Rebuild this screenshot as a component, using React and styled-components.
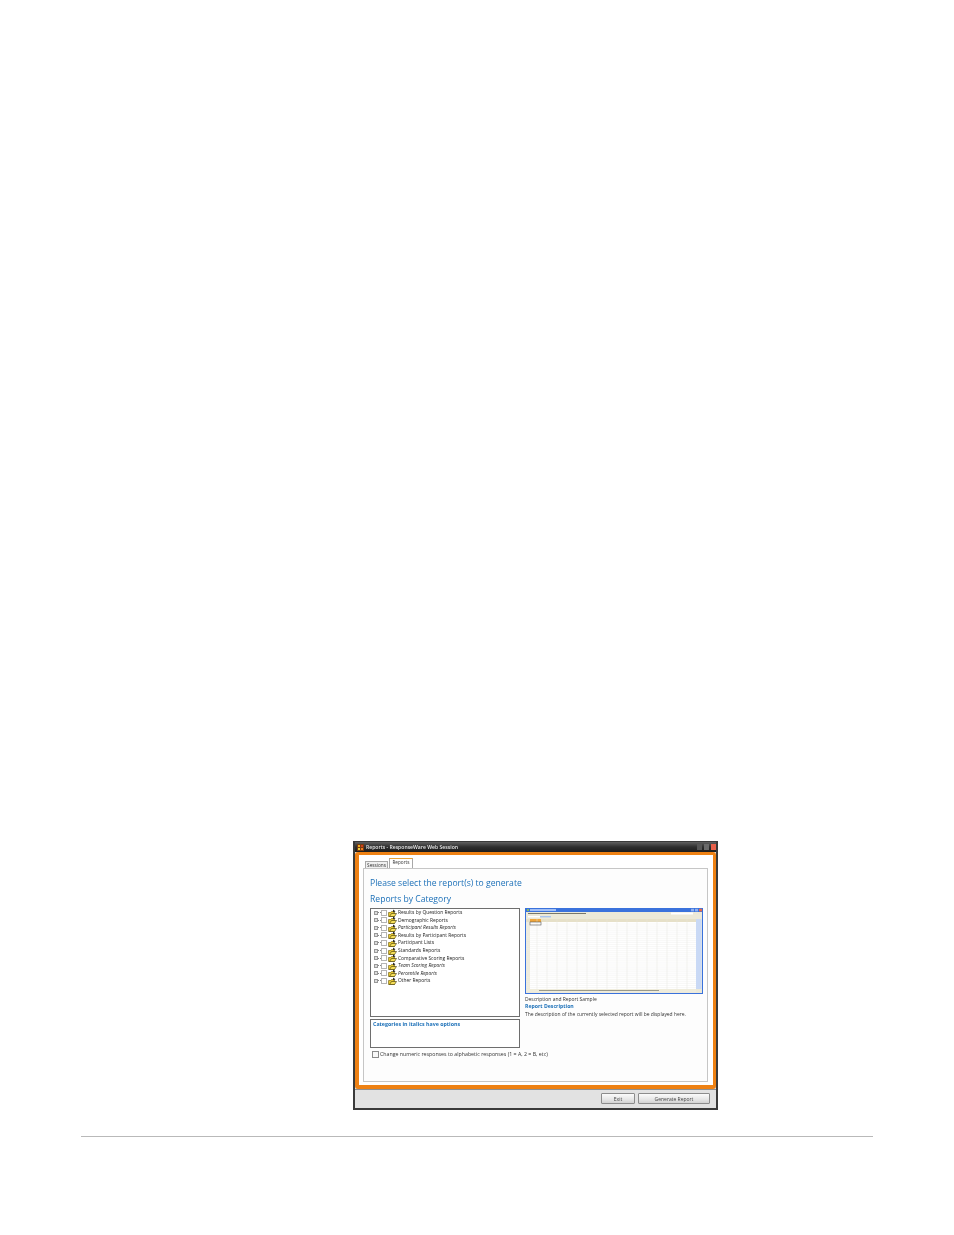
import React from "react";
import styled, { createGlobalStyle } from "styled-components";

const Global = createGlobalStyle`
  html, body { margin: 0; padding: 0; background: #fff; }
  * { box-sizing: border-box; }
`;
const Page = styled.div`
  width: 954px;
  height: 1235px;
  padding-top: 841px;
  font-family: "Open Sans", "Liberation Sans", sans-serif;
  overflow: hidden;
`;
const Win = styled.div`
  width: 365px;
  height: 269px;
  margin-left: 353px;
  display: flex;
  flex-direction: column;
  border: 1px solid #3a3a3a;
  border-left-width: 2px;
  border-right-width: 2px;
  border-bottom-width: 2px;
  background: #e0e0e0;
  filter: blur(0.35px);
`;
const TitleBar = styled.div`
  height: 10px;
  flex: none;
  display: flex;
  align-items: center;
  gap: 1px;
  padding: 0 0 0 2px;
  background: linear-gradient(#606060, #2e2e2e 50%, #1c1c1c);
`;
const Title = styled.span`
  flex: 1;
  margin-left: 1px;
  color: #e8e8e8;
  font-size: 5.1px;
  font-weight: 600;
  line-height: 10px;
  white-space: nowrap;
`;
const WinBtn = styled.span`
  width: 5px;
  height: 6px;
  margin-left: 1px;
  background: ${p => p.$c};
`;
const Frame = styled.div`
  flex: 1;
  display: flex;
  flex-direction: column;
  background: #fff;
  border: 3px solid #ee8113;
  border-left-width: 4px;
  border-bottom-width: 4px;
  border-radius: 3px;
  padding: 3px 5px 3px 4px;
`;
const Tabs = styled.div`
  display: flex;
  align-items: flex-end;
  height: 10px;
  padding-left: 2px;
  gap: 1px;
  flex: none;
`;
const Tab = styled.div`
  width: ${p => p.$w}px;
  height: ${p => (p.$on ? 10 : 7)}px;
  text-align: center;
  font-size: 4.7px;
  line-height: 7px;
  color: #333;
  background: ${p => (p.$on ? "#fff" : "#f0f0f0")};
  border: 0.6px solid #a8a8a8;
  border-bottom: 0;
  border-top: ${p => (p.$on ? "1.2px solid #e8a33a" : "0.6px solid #a8a8a8")};
`;
const Panel = styled.div`
  flex: 1;
  border: 1px solid #c6c6c6;
  background: #fdfdfd;
  padding: 9px 4px 0 6px;
  display: flex;
  flex-direction: column;
`;
const Heading = styled.div`
  font-size: 8.6px;
  line-height: 11px;
  color: #1c70b8;
  white-space: nowrap;
  margin-bottom: ${p => p.$mb}px;
`;
const Columns = styled.div`
  display: grid;
  grid-template-columns: 150px 178px;
  column-gap: 5px;
`;
const Left = styled.div`
  display: flex;
  flex-direction: column;
  gap: 2px;
`;
const TreeBox = styled.div`
  height: 109px;
  border: 1px solid #6e6e6e;
  background: #fff;
  padding: 0 0 0 3px;
  display: flex;
  flex-direction: column;
`;
const Row = styled.div`
  height: 7.55px;
  display: flex;
  align-items: center;
  flex: none;
`;
const Plus = styled.span`
  width: 4px;
  height: 4px;
  border: 0.5px solid #999;
  background: #ddd;
  flex: none;
`;
const Dash = styled.span`
  width: 3px;
  border-top: 0.5px dotted #888;
  flex: none;
`;
const Check = styled.span`
  width: 6px;
  height: 6px;
  margin-right: 1px;
  border: 0.6px solid #b4b4b4;
  background: #fff;
  flex: none;
`;
const Label = styled.span`
  margin-left: 1px;
  font-size: 4.9px;
  line-height: 7px;
  color: #222;
  white-space: nowrap;
  font-style: ${p => (p.$i ? "italic" : "normal")};
`;
const Notes = styled.div`
  height: 29px;
  border: 1px solid #6e6e6e;
  background: #fff;
  padding: 1px 2px;
  font-size: 5.3px;
  line-height: 6px;
  font-weight: 700;
  color: #1c70b8;
  white-space: nowrap;
`;
const OptionRow = styled.div`
  display: flex;
  align-items: center;
  gap: 1px;
  margin: 0 0 0 2px;
  height: 8px;
`;
const OptionBox = styled.span`
  width: 7px;
  height: 7px;
  border: 1px solid #8a8a8a;
  background: #f8f8f8;
  flex: none;
`;
const OptionText = styled.span`
  font-size: 5.25px;
  color: #333;
  white-space: nowrap;
`;
const Preview = styled.svg`
  display: block;
  width: 178px;
  height: 86px;
`;
const Small = styled.div`
  font-size: ${p => (p.$b ? 5.2 : 4.95)}px;
  line-height: 7.4px;
  white-space: nowrap;
  color: ${p => p.$c || "#333"};
  font-weight: ${p => (p.$b ? 700 : 400)};
`;
const Caption = styled.div`
  margin-top: 2px;
`;
const Bottom = styled.div`
  height: 19px;
  flex: none;
  border-top: 1px solid #8f8f8f;
  background: #e2e2e2;
  display: flex;
  justify-content: flex-end;
  align-items: flex-start;
  gap: 3px;
  padding: 3px 6px 0 0;
`;
const Btn = styled.div`
  width: ${p => p.$w}px;
  height: 11px;
  border: 1px solid #8c8c8c;
  border-radius: 1px;
  background: linear-gradient(#fbfbfb, #e6e6e6 60%, #d2d2d2);
  font-size: 5px;
  line-height: 10px;
  text-align: center;
  color: #444;
`;
const Rule = styled.div`
  margin: 26px 81px 0;
  height: 1px;
  background: #b9b9b9;
`;

const Folder = () => (
  <svg width="9" height="8" viewBox="0 0 9 8" style={{ flex: "none" }}>
    <path d="M0.5 3.5h2l1-1h3v5h-6z" fill="#e9c92e" stroke="#6b5a10" strokeWidth="0.6" />
    <path d="M1.5 7.5l2-3h5l-2 3z" fill="#f5de58" stroke="#3a3208" strokeWidth="0.6" />
    <path d="M5 .5l2.5 1.7L5 3.6z" fill="#2b2b2b" />
  </svg>
);

const Sheet = () => {
  const cols = Array.from({ length: 17 }, (_, i) => 12 + i * 10);
  const rows = Array.from({ length: 33 }, (_, i) => 16 + i * 2.05);
  return (
    <Preview viewBox="0 0 178 86">
      <rect width="178" height="86" fill="#3a72dc" />
      <rect x="1" y="4" width="176" height="81" fill="#ece9d8" />
      <rect x="2" y="1" width="2" height="2" fill="#7fb86a" />
      <rect x="5" y="1.3" width="26" height="1.4" fill="#cfe0ff" />
      <rect x="166" y="0.8" width="3" height="2.6" fill="#8fb0ef" />
      <rect x="170" y="0.8" width="3" height="2.6" fill="#8fb0ef" />
      <rect x="174" y="0.8" width="3" height="2.6" fill="#e86a4a" />
      <rect x="3" y="5" width="58" height="1" fill="#77776c" />
      <rect x="146" y="4.5" width="22" height="2" fill="#fff" />
      <rect x="3" y="8" width="12" height="1.4" fill="#fff" />
      <rect x="15" y="8" width="11" height="1.4" fill="#a9c4ee" />
      <rect x="1" y="11" width="170" height="3" fill="#e6e0c8" />
      <rect x="5" y="11" width="11" height="3" fill="#f0a63c" />
      <rect x="1" y="14" width="4" height="67" fill="#efecdc" />
      <rect x="5" y="14" width="166" height="67" fill="#fff" />
      {cols.map(x => (
        <line key={x} x1={x} x2={x} y1="11" y2="81" stroke="#e6e6de" strokeWidth="0.5" />
      ))}
      {rows.map(y => (
        <line key={y} x1="1" x2="171" y1={y} y2={y} stroke="#eeeeea" strokeWidth="0.4" />
      ))}
      <rect x="5" y="14" width="11" height="3" fill="none" stroke="#555" strokeWidth="0.6" />
      <rect x="171" y="11" width="5.5" height="70" fill="#c9d9f5" />
      <rect x="1" y="81" width="170" height="3.5" fill="#efecdc" />
      <rect x="14" y="82" width="120" height="1" fill="#9a9a8c" />
    </Preview>
  );
};

const reports = [
  ["Results by Question Reports"],
  ["Demographic Reports"],
  ["Participant Results Reports", 1],
  ["Results by Participant Reports"],
  ["Participant Lists"],
  ["Standards Reports"],
  ["Comparative Scoring Reports"],
  ["Team Scoring Reports", 1],
  ["Percentile Reports", 1],
  ["Other Reports"],
];

export default function App() {
  return (
    <Page>
      <Global />
      <Win>
        <TitleBar>
          <svg width="7" height="7" viewBox="0 0 7 7">
            <rect width="7" height="7" fill="#7a3b10" />
            <rect x="1" y="1" width="2" height="2" fill="#f0b020" />
            <rect x="4" y="1" width="2" height="2" fill="#d0401a" />
            <rect x="1" y="4" width="2" height="2" fill="#e8d040" />
            <rect x="4" y="4" width="2" height="2" fill="#f08020" />
          </svg>
          <Title>Reports - ResponseWare Web Session</Title>
          <WinBtn $c="#555" />
          <WinBtn $c="#6a6a6a" />
          <WinBtn $c="#e8604a" />
        </TitleBar>
        <Frame>
          <Tabs>
            <Tab $w={23}>Sessions</Tab>
            <Tab $w={24} $on>Reports</Tab>
          </Tabs>
          <Panel>
            <Heading $mb={5}>Please select the report(s) to generate</Heading>
            <Heading $mb={3}>Reports by Category</Heading>
            <Columns>
              <Left>
                <TreeBox>
                  {reports.map(([t, i]) => (
                    <Row key={t}>
                      <Plus />
                      <Dash />
                      <Check />
                      <Folder />
                      <Label $i={i}>{t}</Label>
                    </Row>
                  ))}
                </TreeBox>
                <Notes>Categories in italics have options</Notes>
                <OptionRow>
                  <OptionBox />
                  <OptionText>Change numeric responses to alphabetic responses (1 = A, 2 = B, etc)</OptionText>
                </OptionRow>
              </Left>
              <div>
                <Sheet />
                <Caption>
                  <Small>Description and Report Sample</Small>
                  <Small $c="#1c70b8" $b>Report Description</Small>
                  <Small>The description of the currently selected report will be displayed here.</Small>
                </Caption>
              </div>
            </Columns>
          </Panel>
        </Frame>
        <Bottom>
          <Btn $w={34}>Exit</Btn>
          <Btn $w={72}>Generate Report</Btn>
        </Bottom>
      </Win>
      <Rule />
    </Page>
  );
}
